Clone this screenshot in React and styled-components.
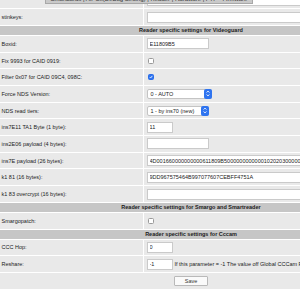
import React from "react";
import styled, { createGlobalStyle } from "styled-components";

const Global = createGlobalStyle`
  html, body {
    margin: 0;
    padding: 0;
    background: #fff;
    overflow: hidden;
  }
  body {
    font-family: "Liberation Sans", Arial, sans-serif;
    color: #222;
  }
`;

const TabBar = styled.div`
  position: fixed;
  top: 0;
  left: 45px;
  width: 208px;
  height: 4px;
  overflow: hidden;
  background: #c9c9c9;
  border: 1px solid #a8a8a8;
  border-top: none;
  box-sizing: border-box;
  z-index: 2;
`;

const TabText = styled.div`
  margin-top: -4px;
  font-size: 6px;
  line-height: 7px;
  text-align: center;
  white-space: nowrap;
  color: #333;
`;

const Table = styled.div`
  display: grid;
  grid-template-columns: 143px 238px;
  gap: 1px;
  width: 382px;
  margin-top: -7.4px;
  background: #fff;
`;

const Cell = styled.div`
  height: 15.7px;
  display: flex;
  align-items: center;
  background: #e9e9e9;
  font-size: 5.5px;
  white-space: nowrap;
  overflow: hidden;
`;

const Label = styled(Cell)`
  padding-left: 1.5px;
`;

const Value = styled(Cell)`
  padding-left: 2.5px;
`;

const Header = styled.div`
  grid-column: 1 / -1;
  height: 9px;
  display: flex;
  align-items: center;
  justify-content: center;
  background: #c6c6c6;
  font-size: 5.5px;
  font-weight: bold;
  color: #1a1a1a;
`;

const SaveRow = styled(Cell)`
  grid-column: 1 / -1;
  justify-content: center;
`;

const Input = styled.input`
  box-sizing: border-box;
  width: ${(p) => p.$w || 62}px;
  height: 11px;
  margin: 0;
  padding: 0 2px;
  border: 1px solid #cacaca;
  background: #fff;
  font-family: inherit;
  font-size: 5.5px;
  color: #222;
  outline: none;
  flex-shrink: 0;
`;

const Box = styled.span`
  box-sizing: border-box;
  width: 6px;
  height: 6px;
  margin-left: 1px;
  border-radius: 1.5px;
  display: inline-flex;
  align-items: center;
  justify-content: center;
  border: 1px solid ${(p) => (p.$on ? "#2b6de8" : "#9a9a9a")};
  background: ${(p) => (p.$on ? "#2f74f0" : "#fff")};
`;

const Select = styled.span`
  box-sizing: border-box;
  width: ${(p) => p.$w}px;
  height: 10px;
  display: inline-flex;
  align-items: center;
  justify-content: space-between;
  border: 1px solid #c4c4c4;
  border-radius: 2px;
  background: #fff;
  padding-left: 3px;
  font-size: 5.5px;
  color: #222;
`;

const Knob = styled.span`
  width: 8px;
  height: 10px;
  margin-right: -1px;
  border-radius: 2px;
  background: #2f74f0;
  display: flex;
  align-items: center;
  justify-content: center;
`;

const Hint = styled.span`
  margin-left: 2px;
  font-size: 5.5px;
`;

const SaveButton = styled.button`
  box-sizing: border-box;
  width: 34px;
  height: 10px;
  padding: 0;
  border: 1px solid #b9b9b9;
  border-radius: 1px;
  background: #fafafa;
  font-family: inherit;
  font-size: 5.5px;
  color: #333;
`;

const Check = ({ on }) => (
  <Box $on={on}>
    {on && (
      <svg width="4" height="4" viewBox="0 0 8 8">
        <path d="M1.5 4.2 L3.3 6 L6.6 1.8" fill="none" stroke="#fff" strokeWidth="1.6" />
      </svg>
    )}
  </Box>
);

const Drop = ({ w, children }) => (
  <Select $w={w}>
    {children}
    <Knob>
      <svg width="4" height="7" viewBox="0 0 4 7">
        <path d="M0.6 2.6 L2 1 L3.4 2.6 M0.6 4.4 L2 6 L3.4 4.4" fill="none" stroke="#fff" strokeWidth="0.8" />
      </svg>
    </Knob>
  </Select>
);

const Row = ({ label, children }) => (
  <>
    <Label>{label}</Label>
    <Value>{children}</Value>
  </>
);

export default function App() {
  return (
    <>
      <Global />
      <TabBar>
        <TabText>Smartcards | Air-Ox(DeBug Setting) | Reader | Hardware | FTP - Firmware</TabText>
      </TabBar>
      <Table>
        <Row label="">
          <Input $w={240} defaultValue="" />
        </Row>
        <Row label="stinkeys:">
          <Input $w={240} defaultValue="" />
        </Row>
        <Header>Reader specific settings for Videoguard</Header>
        <Row label="Boxid:">
          <Input $w={62} defaultValue="E11809B5" />
        </Row>
        <Row label="Fix 9993 for CAID 0919:">
          <Check />
        </Row>
        <Row label="Filter 0x07 for CAID 09C4, 098C:">
          <Check on />
        </Row>
        <Row label="Force NDS Version:">
          <Drop w={65}>0 - AUTO</Drop>
        </Row>
        <Row label="NDS read tiers:">
          <Drop w={62}>1 - by ins70 (new)</Drop>
        </Row>
        <Row label="ins7E11 TA1 Byte (1 byte):">
          <Input $w={26} defaultValue="11" />
        </Row>
        <Row label="ins2E06 payload (4 bytes):">
          <Input $w={62} defaultValue="" />
        </Row>
        <Row label="ins7E payload (26 bytes):">
          <Input $w={240} defaultValue="4D001660000000000611809B50000000000001020203000000000000" />
        </Row>
        <Row label="k1 81 (16 bytes):">
          <Input $w={240} defaultValue="9DD967575464B997077607CEBFF4751A" />
        </Row>
        <Row label="k1 83 overcrypt (16 bytes):">
          <Input $w={240} defaultValue="" />
        </Row>
        <Header>Reader specific settings for Smargo and Smartreader</Header>
        <Row label="Smargopatch:">
          <Check />
        </Row>
        <Header>Reader specific settings for Cccam</Header>
        <Row label="CCC Hop:">
          <Input $w={26} defaultValue="0" />
        </Row>
        <Row label="Reshare:">
          <Input $w={26} defaultValue="-1" />
          <Hint>If this parameter = -1 The value off Global CCCam Reshare will be used</Hint>
        </Row>
        <SaveRow>
          <SaveButton>Save</SaveButton>
        </SaveRow>
      </Table>
    </>
  );
}
